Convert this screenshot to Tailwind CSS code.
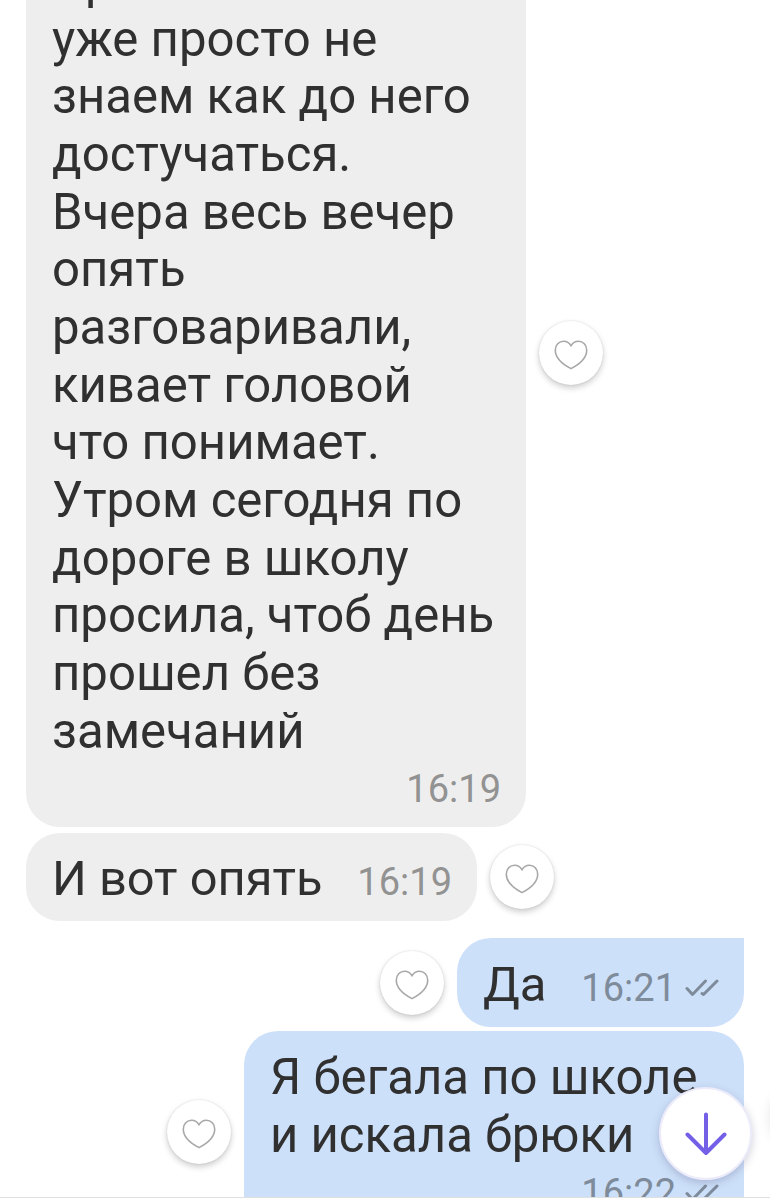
<!DOCTYPE html>
<html lang="ru">
	<head>
		<meta charset="UTF-8" />
		<meta name="viewport" content="width=device-width, initial-scale=1.0" />
		<title>Чат</title>
		<script src="https://cdn.jsdelivr.net/npm/@tailwindcss/browser@4"></script>
	</head>
	<body class="bg-white font-['Roboto',sans-serif] text-[#303030]">
		<svg class="hidden">
			<symbol id="heart" viewBox="0 0 34 30">
				<path d="M17 5.8C15.3 2.9 12.6 1.3 9.6 1.3C4.9 1.3 1.3 5 1.3 10.2C1.3 18.4 8.2 24 17 28.6C25.8 24 32.7 18.4 32.7 10.2C32.7 5 29.1 1.3 24.4 1.3C21.4 1.3 18.7 2.9 17 5.8Z" fill="none" stroke="#a8a8a8" stroke-width="1.6" stroke-linejoin="round" />
			</symbol>
			<symbol id="checks" viewBox="0 0 34 18">
				<path d="M2 9.5L7.5 15.5L20.5 2M17 14.5L18.5 15.5L32 2" fill="none" stroke="currentColor" stroke-width="3" stroke-linecap="round" stroke-linejoin="round" />
			</symbol>
		</svg>

		<div class="relative h-[1200px] w-[770px] overflow-hidden">
			<main class="flex h-[1197px] flex-col overflow-hidden pr-[26px] pl-[26px]">
				<!-- Incoming -->
				<div class="-mt-[75px] flex h-[902px] shrink-0 items-center gap-[13px]">
					<div class="flex h-full w-[500px] flex-col rounded-[34px] bg-[#eeeeee] pt-[28px] pl-[26px]">
						<p class="text-[49.1px] leading-[57.67px] whitespace-nowrap">
							Эр<br />уже просто не<br />знаем как до него<br />достучаться.<br />Вчера весь вечер<br />опять<br />разговаривали,<br />кивает головой<br />что понимает.<br />Утром сегодня по<br />дороге в школу<br />просила, чтоб день<br />прошел без<br />замечаний
						</p>
						<span class="mt-[6px] mr-[25px] self-end text-[38px] leading-[46px] text-[#929292]">16:19</span>
					</div>
					<button class="-mt-[46px] flex size-16 items-center justify-center rounded-full bg-white pt-1 shadow-[0_3px_6px_rgba(0,0,0,0.2),0_0_2px_rgba(0,0,0,0.12)]">
						<svg class="h-[30px] w-[34px]"><use href="#heart" /></svg>
					</button>
				</div>
				<div class="mt-[6px] flex h-[88px] shrink-0 items-center gap-[13px]">
					<div class="flex h-full w-[451px] items-baseline justify-between rounded-[34px] bg-[#eeeeee] pt-[17px] pr-[25px] pl-[26px]">
						<p class="text-[48.8px] leading-[57.67px]">И вот опять</p>
						<span class="text-[38px] leading-[46px] text-[#929292]">16:19</span>
					</div>
					<button class="flex size-16 items-center justify-center rounded-full bg-white pt-1 shadow-[0_3px_6px_rgba(0,0,0,0.2),0_0_2px_rgba(0,0,0,0.12)]">
						<svg class="h-[30px] w-[34px]"><use href="#heart" /></svg>
					</button>
				</div>

				<!-- Outgoing -->
				<div class="mt-[17px] flex h-[89px] shrink-0 items-center justify-end gap-[13px]">
					<button class="flex size-16 items-center justify-center rounded-full bg-white pt-1 shadow-[0_3px_6px_rgba(0,0,0,0.2),0_0_2px_rgba(0,0,0,0.12)]">
						<svg class="h-[30px] w-[34px]"><use href="#heart" /></svg>
					</button>
					<div class="flex h-full w-[287px] items-baseline rounded-[34px] rounded-tr-none bg-[#cde0f9] pt-[18px] pr-[25px] pl-[26px]">
						<p class="text-[49px] leading-[57.67px]">Да</p>
						<span class="ml-auto text-[38px] leading-[46px] text-[#7e8b9b]">16:21</span>
						<svg class="ml-[9px] h-[22px] w-[34px] pb-1 text-[#7e8b9b]" viewBox="0 0 34 18"><use href="#checks" width="34" height="18" /></svg>
					</div>
				</div>
				<div class="mt-[4px] flex h-[202px] shrink-0 items-center justify-end gap-[13px]">
					<button class="flex size-16 items-center justify-center rounded-full bg-white pt-1 shadow-[0_3px_6px_rgba(0,0,0,0.2),0_0_2px_rgba(0,0,0,0.12)]">
						<svg class="h-[30px] w-[34px]"><use href="#heart" /></svg>
					</button>
					<div class="flex h-full w-[500px] flex-col rounded-[34px] bg-[#cde0f9] pt-[18px] pr-[25px] pl-[26px]">
						<p class="text-[49.1px] leading-[57.67px] whitespace-nowrap">Я бегала по школе<br />и искала брюки</p>
						<div class="mt-[6px] flex items-baseline self-end text-[#7e8b9b]">
							<span class="text-[38px] leading-[46px]">16:22</span>
							<svg class="ml-[9px] h-[22px] w-[34px] pb-1" viewBox="0 0 34 18"><use href="#checks" width="34" height="18" /></svg>
						</div>
					</div>
				</div>
			</main>
			<div class="h-px bg-[#e0e0e0]"></div>

			<!-- Scroll to bottom -->
			<button class="absolute top-[1087px] left-[659px] flex size-[93px] items-center justify-center rounded-full border-2 border-[#ebebfa] bg-white shadow-[0_3px_8px_rgba(60,60,110,0.25)]">
				<svg class="h-[44px] w-[42px]" viewBox="0 0 42 44" fill="none" stroke="#7360e6" stroke-width="4" stroke-linecap="round" stroke-linejoin="round">
					<path d="M21 2.5V41M2.5 22.5L21 41L39.5 22.5" />
				</svg>
			</button>
			<div class="absolute top-[1083px] left-[771px] size-16 rounded-full shadow-[0_3px_14px_rgba(0,0,0,0.12)]"></div>
		</div>
	</body>
</html>
